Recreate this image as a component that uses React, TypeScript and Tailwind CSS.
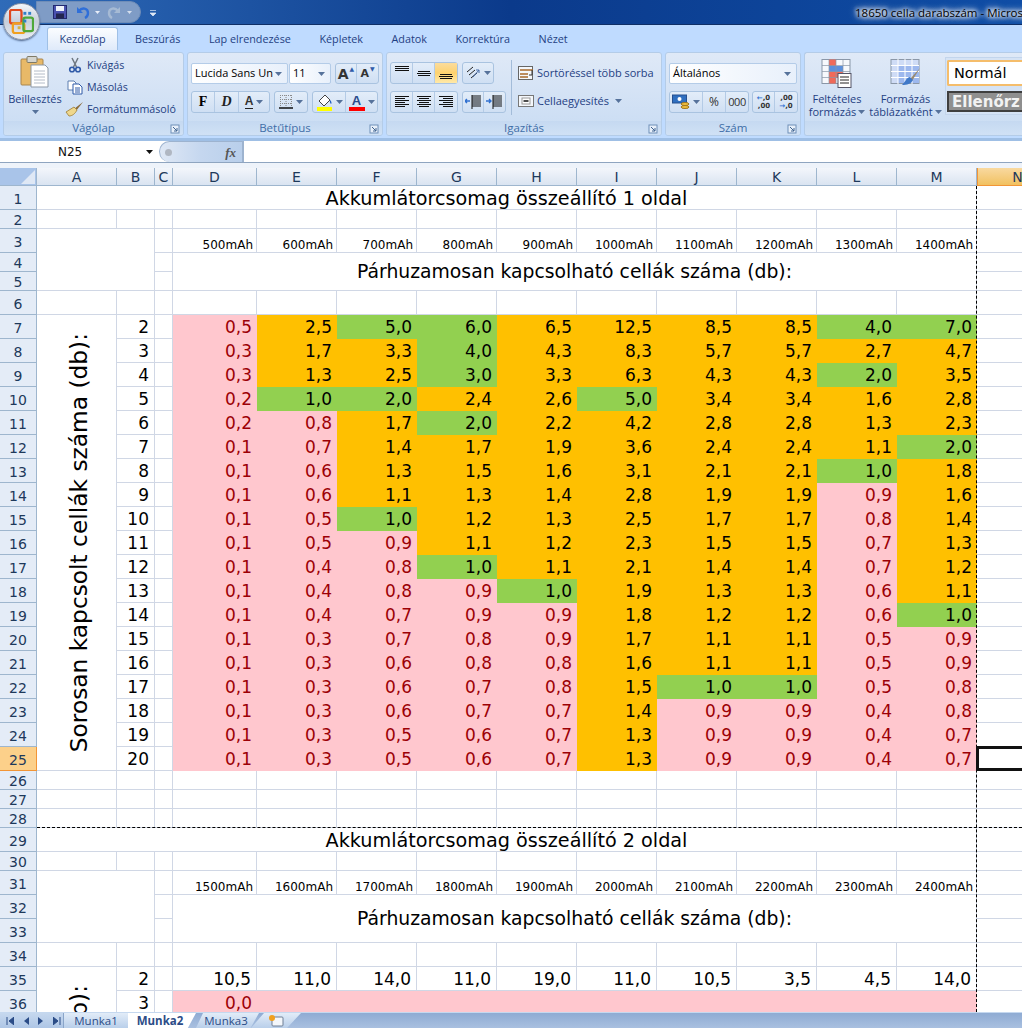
import type { ReactNode } from "react";

const uiFont = "font-['Open_Sans','DejaVu_Sans',sans-serif]";
const cellFont = "font-['DejaVu_Sans',sans-serif]";
const grid = "border-r border-b border-[#d0d7e5]";

const columns = ["A", "B", "C", "D", "E", "F", "G", "H", "I", "J", "K", "L", "M", "N"];

const page1: string[][] = [
  ["0,5", "2,5", "5,0", "6,0", "6,5", "12,5", "8,5", "8,5", "4,0", "7,0"],
  ["0,3", "1,7", "3,3", "4,0", "4,3", "8,3", "5,7", "5,7", "2,7", "4,7"],
  ["0,3", "1,3", "2,5", "3,0", "3,3", "6,3", "4,3", "4,3", "2,0", "3,5"],
  ["0,2", "1,0", "2,0", "2,4", "2,6", "5,0", "3,4", "3,4", "1,6", "2,8"],
  ["0,2", "0,8", "1,7", "2,0", "2,2", "4,2", "2,8", "2,8", "1,3", "2,3"],
  ["0,1", "0,7", "1,4", "1,7", "1,9", "3,6", "2,4", "2,4", "1,1", "2,0"],
  ["0,1", "0,6", "1,3", "1,5", "1,6", "3,1", "2,1", "2,1", "1,0", "1,8"],
  ["0,1", "0,6", "1,1", "1,3", "1,4", "2,8", "1,9", "1,9", "0,9", "1,6"],
  ["0,1", "0,5", "1,0", "1,2", "1,3", "2,5", "1,7", "1,7", "0,8", "1,4"],
  ["0,1", "0,5", "0,9", "1,1", "1,2", "2,3", "1,5", "1,5", "0,7", "1,3"],
  ["0,1", "0,4", "0,8", "1,0", "1,1", "2,1", "1,4", "1,4", "0,7", "1,2"],
  ["0,1", "0,4", "0,8", "0,9", "1,0", "1,9", "1,3", "1,3", "0,6", "1,1"],
  ["0,1", "0,4", "0,7", "0,9", "0,9", "1,8", "1,2", "1,2", "0,6", "1,0"],
  ["0,1", "0,3", "0,7", "0,8", "0,9", "1,7", "1,1", "1,1", "0,5", "0,9"],
  ["0,1", "0,3", "0,6", "0,8", "0,8", "1,6", "1,1", "1,1", "0,5", "0,9"],
  ["0,1", "0,3", "0,6", "0,7", "0,8", "1,5", "1,0", "1,0", "0,5", "0,8"],
  ["0,1", "0,3", "0,6", "0,7", "0,7", "1,4", "0,9", "0,9", "0,4", "0,8"],
  ["0,1", "0,3", "0,5", "0,6", "0,7", "1,3", "0,9", "0,9", "0,4", "0,7"],
  ["0,1", "0,3", "0,5", "0,6", "0,7", "1,3", "0,9", "0,9", "0,4", "0,7"],
];

const row35 = ["10,5", "11,0", "14,0", "11,0", "19,0", "11,0", "10,5", "3,5", "4,5", "14,0"];
const caps1 = ["500", "600", "700", "800", "900", "1000", "1100", "1200", "1300", "1400"];
const caps2 = ["1500", "1600", "1700", "1800", "1900", "2000", "2100", "2200", "2300", "2400"];

// same rule as the conditional formatting in the sheet
function fillFor(v: string) {
  const n = parseFloat(v.replace(",", "."));
  if (n < 1) return "bg-[#ffc7ce] text-[#9c0006]";
  if (Number.isInteger(n)) return "bg-[#92d050] text-black";
  return "bg-[#ffc000] text-black";
}

function Caret({ className = "" }: { className?: string }) {
  return (
    <svg width="7" height="4" viewBox="0 0 7 4" className={className}>
      <path d="M0 0h7L3.5 4z" fill="#56729b" />
    </svg>
  );
}

function Launcher() {
  return (
    <svg width="10" height="10" viewBox="0 0 10 10" className="absolute right-[3px] top-[3px]">
      <rect x="1" y="1" width="8" height="8" fill="#e8f0fa" stroke="#6f8fb8" />
      <path d="M3 3l4 4M7 4v3H4" stroke="#3f638f" fill="none" />
    </svg>
  );
}

function Group({ label, width, children, last }: { label?: string; width: string; children: ReactNode; last?: boolean }) {
  return (
    <div className={`${width} ${last ? "rounded-l-[3px] border-r-0" : "rounded-[3px]"} flex shrink-0 flex-col overflow-hidden border border-[#b4cce8] bg-gradient-to-b from-[#dfe9f7] to-[#c9dcf3]`}>
      <div className="relative h-[68px] shrink-0">{children}</div>
      <div className="relative flex flex-1 items-center justify-center bg-gradient-to-b from-[#c5d9f1] to-[#d0e1f5] text-[11.5px] leading-none text-[#3f6ea8]">
        {label}
        {label && <Launcher />}
      </div>
    </div>
  );
}

function BtnGroup({ children, className = "" }: { children: ReactNode; className?: string }) {
  return (
    <div className={`flex items-stretch divide-x divide-[#b4cbe6] rounded-[3px] border border-[#a9c3e0] bg-gradient-to-b from-[#e3edf9] to-[#cfdff3] ${className}`}>
      {children}
    </div>
  );
}

function Btn({ children, w = "w-[22px]", active }: { children: ReactNode; w?: string; active?: boolean }) {
  return (
    <div className={`flex ${w} items-center justify-center gap-[3px] ${active ? "bg-gradient-to-b from-[#fbdc9c] via-[#fdd26e] to-[#ffe9a8]" : ""}`}>{children}</div>
  );
}

function Lines({ rows }: { rows: [number, number, number][] }) {
  return (
    <svg width="16" height="14" viewBox="0 0 16 14">
      {rows.map(([x1, x2, y], i) => (
        <rect key={i} x={x1} y={y} width={x2 - x1} height="1" fill="#111" />
      ))}
    </svg>
  );
}

const Select = ({ text, className }: { text: string; className: string }) => (
  <div className={`flex items-center justify-between rounded-[2px] border border-[#b4cce8] bg-gradient-to-r from-white to-[#e8f0fb] pl-[3px] pr-[5px] text-[11px] text-black ${className}`}>
    <span className="whitespace-nowrap">{text}</span>
    <Caret />
  </div>
);

function ClipboardGroup() {
  return (
    <Group label="Vágólap" width="w-[181px]">
      <div className="flex h-full">
        <div className="flex w-[62px] flex-col items-center pt-[3px]">
          <svg width="30" height="32" viewBox="0 0 30 32">
            <rect x="1" y="3" width="22" height="26" rx="1" fill="#e8b968" stroke="#a9854c" />
            <rect x="7" y="0.5" width="10" height="6" rx="1" fill="#d5d5cf" stroke="#7f7a66" />
            <path d="M11 9h14l3 3v19H11z" fill="#fff" stroke="#8d99a8" />
            <path d="M14 15h11M14 18h11M14 21h11M14 24h11M14 27h11" stroke="#b4bcc8" />
          </svg>
          <div className="mt-[4px] text-[11px] leading-[14px] text-[#1f3f83]">Beillesztés</div>
          <Caret className="mt-[4px]" />
        </div>
        <div className="flex flex-col gap-[6px] pl-[1px] pt-[4px] text-[10.7px] leading-[16px] text-[#1f3f83]">
          <div className="flex items-center gap-[4px]">
            <svg width="16" height="16" viewBox="0 0 16 16">
              <path d="M5 1l4.5 9M11 1L6.5 10" stroke="#6f7780" strokeWidth="1.5" />
              <circle cx="5" cy="12.5" r="2.3" fill="none" stroke="#2f5aa8" strokeWidth="1.6" />
              <circle cx="11" cy="12.5" r="2.3" fill="none" stroke="#2f5aa8" strokeWidth="1.6" />
            </svg>
            Kivágás
          </div>
          <div className="flex items-center gap-[4px]">
            <svg width="16" height="16" viewBox="0 0 16 16">
              <path d="M1 2h6l2 2v7H1z" fill="#fff" stroke="#5c7fb0" />
              <path d="M6 5h6l3 3v7H6z" fill="#fff" stroke="#2f5aa8" />
              <path d="M8 9h5M8 11h5M8 13h5" stroke="#2f5aa8" />
            </svg>
            Másolás
          </div>
          <div className="-ml-[2px] flex items-center gap-[3px]">
            <svg width="19" height="16" viewBox="0 0 19 16">
              <path d="M18 1L9 8l2 2z" fill="#8a6a3a" />
              <path d="M9 6L1 11l3 4c3 0 6-2 8-6z" fill="#efd78c" stroke="#a98e4c" />
            </svg>
            Formátummásoló
          </div>
        </div>
      </div>
    </Group>
  );
}

function FontGroup() {
  return (
    <Group label="Betűtípus" width="w-[196px]">
      <div className="flex flex-col gap-[7px] pl-[3px] pt-[10px]">
        <div className="flex h-[21px] gap-[1px]">
          <Select text="Lucida Sans Un" className="w-[97px]" />
          <Select text="11" className="w-[42px]" />
          <BtnGroup className="ml-[3px]">
            <Btn w="w-[21px]">
              <span className={`${cellFont} text-[14px] font-bold leading-none text-[#333]`}>A</span>
              <span className="-ml-[2px] -mt-[8px] text-[6px] text-[#2f5aa8]">▲</span>
            </Btn>
            <Btn w="w-[21px]">
              <span className={`${cellFont} text-[11px] font-bold leading-none text-[#333]`}>A</span>
              <span className="-ml-[2px] -mt-[8px] text-[6px] text-[#2f5aa8]">▼</span>
            </Btn>
          </BtnGroup>
        </div>
        <div className="flex h-[22px] gap-[4px]">
          <BtnGroup>
            <Btn w="w-[23px]">
              <span className="font-['Liberation_Serif',serif] text-[14px] font-bold leading-none text-black">F</span>
            </Btn>
            <Btn w="w-[24px]">
              <span className="font-['Liberation_Serif',serif] text-[14px] font-bold italic leading-none text-[#222]">D</span>
            </Btn>
            <Btn w="w-[30px]">
              <span className="border-b border-[#222] font-['Liberation_Sans',sans-serif] text-[12px] font-bold leading-[13px] text-[#333]">A</span>
              <Caret />
            </Btn>
          </BtnGroup>
          <BtnGroup>
            <Btn w="w-[32px]">
              <svg width="14" height="14" viewBox="0 0 14 14">
                <path d="M1 .5h12M1 4.5h12M1 8.5h12M1.5 0v12M7 0v12M12.5 0v12" stroke="#8a8a8a" strokeDasharray="1 1" />
                <path d="M0 13h14" stroke="#111" strokeWidth="1.4" />
              </svg>
              <Caret />
            </Btn>
          </BtnGroup>
          <BtnGroup>
            <Btn w="w-[33px]">
              <svg width="17" height="17" viewBox="0 0 17 17">
                <path d="M3 7l6-6 5 5-6 6z" fill="#fff" stroke="#444" />
                <path d="M14 6c1.5 1.5 2 3 1 4-1-1-1.500-2.500-1-4z" fill="#1f5fbf" />
                <rect x="1" y="13" width="15" height="4" fill="#ffff00" />
              </svg>
              <Caret />
            </Btn>
            <Btn w="w-[31px]">
              <span className="relative flex flex-col items-center">
                <span className="font-['Liberation_Sans',sans-serif] text-[13px] font-bold leading-[13px] text-[#2a4c8c]">A</span>
                <span className="h-[4px] w-[16px] bg-[#ff0000]" />
              </span>
              <Caret />
            </Btn>
          </BtnGroup>
        </div>
      </div>
    </Group>
  );
}

function AlignGroup() {
  return (
    <Group label="Igazítás" width="w-[276px]">
      <div className="flex h-full">
        <div className="flex flex-col gap-[7px] pl-[3px] pt-[9px]">
          <div className="flex h-[22px] gap-[4px]">
            <BtnGroup>
              <Btn><Lines rows={[[1, 15, 0], [1, 15, 2], [1, 15, 4]]} /></Btn>
              <Btn><Lines rows={[[2, 14, 5], [1, 15, 7], [2, 14, 9]]} /></Btn>
              <Btn active><Lines rows={[[2, 14, 8], [1, 15, 10], [2, 14, 12]]} /></Btn>
            </BtnGroup>
            <BtnGroup>
              <Btn w="w-[30px]">
                <svg width="16" height="14" viewBox="0 0 16 14">
                  <path d="M2 6l6-5M4 9l6-5M6 12l6-5" stroke="#222" />
                  <path d="M8 11l6-7m0 0h-3m3 0v3" stroke="#4a6ea8" fill="none" />
                </svg>
                <Caret />
              </Btn>
            </BtnGroup>
          </div>
          <div className="flex h-[22px] gap-[4px]">
            <BtnGroup>
              <Btn><Lines rows={[[1, 15, 1], [1, 11, 3], [1, 15, 5], [1, 11, 7], [1, 15, 9], [1, 11, 11]]} /></Btn>
              <Btn><Lines rows={[[1, 15, 1], [3, 13, 3], [1, 15, 5], [3, 13, 7], [1, 15, 9], [3, 13, 11]]} /></Btn>
              <Btn><Lines rows={[[1, 15, 1], [5, 15, 3], [1, 15, 5], [5, 15, 7], [1, 15, 9], [5, 15, 11]]} /></Btn>
            </BtnGroup>
            <BtnGroup>
              <Btn w="w-[21px]">
                <svg width="17" height="14" viewBox="0 0 17 14">
                  <path d="M7 1h9M7 3h9M7 5h9M7 7h9M7 9h9M7 11h9M7 0v14" stroke="#111" />
                  <path d="M0 6h5M2 4L0 6l2 2" stroke="#2f6fd0" fill="none" strokeWidth="1.4" />
                </svg>
              </Btn>
              <Btn w="w-[21px]">
                <svg width="17" height="14" viewBox="0 0 17 14">
                  <path d="M7 1h9M7 3h9M7 5h9M7 7h9M7 9h9M7 11h9M7 0v14" stroke="#111" />
                  <path d="M0 6h5M3 4l2 2-2 2" stroke="#2f6fd0" fill="none" strokeWidth="1.4" />
                </svg>
              </Btn>
            </BtnGroup>
          </div>
        </div>
        <div className="ml-[5px] mt-[7px] h-[55px] w-px bg-[#a3bcd9]" />
        <div className="flex flex-col gap-[8px] pl-[6px] pt-[10px] text-[11px] leading-[20px] text-[#1f3f83]">
          <div className="flex items-center gap-[3px]">
            <svg width="16" height="15" viewBox="0 0 16 15">
              <rect x="0.500" y="0.500" width="14" height="13" fill="#f4f7fb" stroke="#666" />
              <path d="M2 4h13M2 8h8M2 11h8" stroke="#a8692b" strokeWidth="1.4" />
              <path d="M14 4v5h-3" stroke="#333" fill="none" />
            </svg>
            <span className="whitespace-nowrap">Sortöréssel több sorba</span>
          </div>
          <div className="flex items-center gap-[3px]">
            <svg width="16" height="15" viewBox="0 0 16 15">
              <rect x="0.500" y="1.500" width="15" height="11" fill="#f4f7fb" stroke="#777" />
              <rect x="4" y="4" width="8" height="6" fill="#fff" stroke="#999" />
              <path d="M5.500 7h5" stroke="#111" strokeWidth="1.400" />
            </svg>
            <span className="whitespace-nowrap">Cellaegyesítés</span>
            <Caret className="ml-[3px]" />
          </div>
        </div>
      </div>
    </Group>
  );
}

function NumberGroup() {
  return (
    <Group label="Szám" width="w-[136px]">
      <div className="flex flex-col gap-[7px] pl-[3px] pt-[10px]">
        <Select text="Általános" className="h-[21px] w-[128px]" />
        <div className="flex h-[22px] gap-[3px]">
          <BtnGroup>
            <Btn w="w-[33px]">
              <svg width="18" height="16" viewBox="0 0 18 16">
                <rect x="0.500" y="1" width="14" height="8" fill="#2f6fc0" stroke="#26508f" />
                <circle cx="7.500" cy="5" r="2" fill="#fff" />
                <ellipse cx="13" cy="10" rx="4" ry="1.500" fill="#f0c040" stroke="#a07820" />
                <ellipse cx="13" cy="13" rx="4" ry="1.500" fill="#f0c040" stroke="#a07820" />
              </svg>
              <Caret />
            </Btn>
            <Btn w="w-[23px]"><span className="text-[12px] text-[#333]">%</span></Btn>
            <Btn w="w-[22px]"><span className="text-[11px] tracking-[-0.5px] text-[#333]">000</span></Btn>
          </BtnGroup>
          <BtnGroup>
            <Btn w="w-[22px]">
              <span className={`${cellFont} relative text-right text-[7px] font-bold leading-[8px] text-[#333]`}>
                <span className="text-[#2f6fd0]">←</span>,0
                <br />,00
              </span>
            </Btn>
            <Btn w="w-[22px]">
              <span className={`${cellFont} relative text-right text-[7px] font-bold leading-[8px] text-[#333]`}>
                ,00
                <br />
                <span className="text-[#2f6fd0]">→</span>,0
              </span>
            </Btn>
          </BtnGroup>
        </div>
      </div>
    </Group>
  );
}

function BigBtn({ icon, lines, w }: { icon: ReactNode; lines: string[]; w: string }) {
  return (
    <div className={`flex ${w} shrink-0 flex-col items-center pt-[6px] text-[11px] leading-[13px] text-[#1f3f83]`}>
      <div className="h-[31px]">{icon}</div>
      <div className="mt-[2px] whitespace-nowrap">{lines[0]}</div>
      <div className="flex items-center gap-[2px] whitespace-nowrap">
        {lines[1]}
        <Caret />
      </div>
    </div>
  );
}

function StylesGroup() {
  return (
    <Group width="w-[218px]" last>
      <div className="flex h-full">
        <BigBtn
          w="w-[64px]"
          lines={["Feltételes", "formázás"]}
          icon={
            <svg width="32" height="30" viewBox="0 0 32 30">
              <rect x="1" y="0.500" width="28" height="24" fill="#f6f8fc" stroke="#8a97a8" />
              <rect x="8" y="0.500" width="7" height="24" fill="#ef6a5a" />
              <rect x="8" y="7" width="14" height="6" fill="#5b8fdc" />
              <rect x="8" y="13" width="14" height="6" fill="#ef6a5a" />
              <path d="M1 6.500h28M1 12.500h28M1 18.500h28M8 0v25M15 0v25M22 0v25" stroke="#8a97a8" strokeWidth="0.700" />
              <rect x="17" y="14.500" width="13" height="14" fill="#fff" stroke="#556" />
              <path d="M19 18h9M19 21h9M19 24h9" stroke="#222" />
            </svg>
          }
        />
        <BigBtn
          w="w-[73px]"
          lines={["Formázás", "táblázatként"]}
          icon={
            <svg width="32" height="30" viewBox="0 0 32 30">
              <rect x="1" y="0.500" width="28" height="24" fill="#cfdcf6" stroke="#8a97a8" />
              <rect x="8" y="7" width="21" height="17" fill="#9db8ee" />
              <path d="M1 6.500h28M1 12.500h28M1 18.500h28M8 0v25M15 0v25M22 0v25" stroke="#fff" />
              <path d="M30 9L20 20l2 2z" fill="#9a8a70" />
              <path d="M20 18c-3 0-4 4-8 8 5 0 9-1 11-5z" fill="#3f78c8" />
            </svg>
          }
        />
        <div className="ml-[3px] mt-[4px] flex h-[58px] w-full flex-col gap-[5px] border-y border-l border-[#c3d5ec] bg-[#d5e3f5] pl-[1px] pt-[2px]">
          <div className="h-[26px] rounded-l-[2px] border-2 border-r-0 border-[#f5bd6b] bg-white pl-[5px] text-[14.5px] leading-[21px] text-black">
            <span className={cellFont}>Normál</span>
          </div>
          <div className="h-[21px] border-2 border-r-0 border-[#3f3f3f] bg-[#8f8f8f] pl-[3px] text-[15px] font-bold leading-[16px] text-[#f2f2f2]">
            <span className={cellFont}>Ellenőrz</span>
          </div>
        </div>
      </div>
    </Group>
  );
}

function TitleBar() {
  return (
    <div className="relative h-[25px] shrink-0 overflow-hidden border-b border-[#0f2f66] bg-gradient-to-r from-[#2f6bb8] via-[#0b3a8b] to-[#0f4da6]">
      <div className="absolute left-[36px] top-[1px] flex h-[22px] w-[105px] items-center rounded-r-[12px] border border-[#6f8db8] bg-[#7f9cc6] pl-[16px]">
        <svg width="14" height="14" viewBox="0 0 14 14">
          <rect x="0.500" y="0.500" width="13" height="13" fill="#4a52b0" stroke="#222a70" />
          <rect x="3" y="1" width="8" height="5" fill="#eef2fa" />
          <rect x="3" y="8.500" width="8" height="5" fill="#22264f" />
        </svg>
        <svg width="14" height="13" viewBox="0 0 14 13" className="ml-[9px]">
          <path d="M3 5c3-4 9-3 9 2 0 2-1 4-3 5" fill="none" stroke="#2f6fd8" strokeWidth="2.400" />
          <path d="M1 1v6h6z" fill="#2f6fd8" />
        </svg>
        <span className="ml-[5px] mt-[1px]"><svg width="5" height="3"><path d="M0 0h5L2.500 3z" fill="#e8eef8" /></svg></span>
        <svg width="14" height="13" viewBox="0 0 14 13" className="ml-[7px]">
          <path d="M11 5C8 1 2 2 2 7c0 2 1 4 3 5" fill="none" stroke="#a6bad4" strokeWidth="2.400" />
          <path d="M13 1v6H7z" fill="#a6bad4" />
        </svg>
        <span className="ml-[6px] mt-[1px]"><svg width="5" height="3"><path d="M0 0h5L2.500 3z" fill="#d5dfee" /></svg></span>
      </div>
      <svg width="6" height="6" viewBox="0 0 6 6" className="absolute left-[150px] top-[10px]">
        <path d="M0 0.500h6M0 3h6L3 6z" stroke="#dfe8f5" fill="#dfe8f5" strokeWidth="0.700" />
      </svg>
      <div className={`${uiFont} absolute left-[855px] top-[5px] whitespace-nowrap text-[11.5px] leading-[16px] text-black [text-shadow:0_0_4px_#fff,0_0_4px_#fff,0_0_7px_#fff,0_0_10px_#fff]`}>
        18650 cella darabszám - Microsoft Excel
      </div>
    </div>
  );
}

function OfficeButton() {
  return (
    <div className="absolute left-[3px] top-[3px] flex h-[37px] w-[37px] items-center justify-center rounded-full border border-[#8a94a6] bg-gradient-to-b from-[#f4f6fa] via-[#c7cfdb] to-[#e9edf4] shadow-[0_1px_2px_#4a6288]">
      <svg width="25" height="25" viewBox="0 0 26 26">
        <rect x="1" y="1" width="12" height="14" rx="2" fill="none" stroke="#e0491f" strokeWidth="2.400" />
        <rect x="4" y="15" width="12" height="10" rx="2" fill="none" stroke="#f0a020" strokeWidth="2.400" />
        <rect x="15" y="9" width="10" height="14" rx="2" fill="none" stroke="#4fa83a" strokeWidth="2.400" />
        <rect x="15" y="3" width="3" height="3" fill="#2f7fc8" />
        <rect x="20" y="3" width="3" height="3" fill="#2f7fc8" />
        <rect x="15" y="11" width="3" height="3" fill="#2f7fc8" />
        <rect x="9" y="18" width="3" height="3" fill="#d8b040" />
      </svg>
    </div>
  );
}

function TabStrip() {
  const tabs = ["Beszúrás", "Lap elrendezése", "Képletek", "Adatok", "Korrektúra", "Nézet"];
  return (
    <div className={`${uiFont} flex h-[25px] shrink-0 items-end bg-[#bfdbff] pl-[47px] text-[10.8px] text-[#1f3f83]`}>
      <div className="flex h-[23px] w-[71px] items-center justify-center rounded-t-[3px] border border-b-0 border-[#9fc0e6] bg-gradient-to-b from-[#fbfdff] to-[#dfeafa] pt-[1px]">
        Kezdőlap
      </div>
      <div className="ml-[17px] flex h-[23px] items-center gap-[28.5px] pt-[1px]">
        {tabs.map((t) => (
          <span key={t}>{t}</span>
        ))}
      </div>
    </div>
  );
}

function Ribbon() {
  return (
    <div className={`${uiFont} flex h-[91px] shrink-0 gap-[3px] border-b-[3px] border-[#9fbfe5] bg-[#bfdbff] pb-[2px] pl-[3px] pt-[2px]`}>
      <ClipboardGroup />
      <FontGroup />
      <AlignGroup />
      <NumberGroup />
      <StylesGroup />
    </div>
  );
}

function FormulaBar() {
  return (
    <div className="flex h-[27px] shrink-0 flex-col bg-white">
      <div className="flex h-[22px] border-b border-[#8fa5c0]">
        <div className={`${cellFont} flex w-[159px] items-center justify-between pl-[58px] pr-[6px] text-[12px] text-[#111]`}>
          N25
          <svg width="7" height="4"><path d="M0 0h7L3.500 4z" fill="#111" /></svg>
        </div>
        <div className="flex w-[84px] items-center justify-between rounded-l-[11px] border border-b-0 border-[#9db3cf] bg-gradient-to-r from-[#dfe8f5] via-[#c5d7ef] to-[#b9cfeb] pl-[5px] pr-[6px]">
          <span className="h-[7px] w-[7px] rounded-full bg-[#b0b7c2]" />
          <span className="font-['Liberation_Serif',serif] text-[13px] font-bold italic leading-none text-[#555]">fx</span>
        </div>
        <div className="flex-1 border-l border-[#9db3cf]" />
      </div>
      <div className="flex-1 bg-[#eef3fa]" />
    </div>
  );
}

function ColHeader({ c }: { c: string }) {
  if (c === "N") {
    return (
      <div className="flex items-center justify-center border-b border-l border-[#f29536] bg-gradient-to-b from-[#f9d99f] to-[#f1c15f] text-[14px] leading-none text-[#1e395b]">
        {c}
      </div>
    );
  }
  return (
    <div className="flex items-center justify-center border-r border-b border-[#9eb6ce] bg-gradient-to-b from-[#f3f6fb] to-[#dae4f1] text-[14px] leading-none text-[#1e395b]">
      {c}
    </div>
  );
}

function RowHeader({ n, selected }: { n: number; selected?: boolean }) {
  return (
    <div className={`flex items-center justify-center border-b border-r pt-[2px] text-[14px] leading-none text-[#1e395b] ${selected ? "border-[#f29536] bg-[#fcd08a]" : "border-[#9eb6ce] bg-[#e4ecf7]"}`}>
      {n}
    </div>
  );
}

const Empty = ({ className = "" }: { className?: string }) => <div className={`${grid} ${className}`} />;

function EmptyRow({ n }: { n: number }) {
  return (
    <>
      <RowHeader n={n} />
      {columns.map((c) => (
        <Empty key={c} />
      ))}
    </>
  );
}

function TitleRow({ n, text }: { n: number; text: string }) {
  return (
    <>
      <RowHeader n={n} />
      <div className={`${grid} col-span-13 flex items-center justify-center pt-[3px] text-[19.2px] leading-none text-black`}>{text}</div>
      <Empty />
    </>
  );
}

function CapsBlock({ n, caps }: { n: number; caps: string[] }) {
  return (
    <>
      <RowHeader n={n} />
      <div className={`${grid} col-span-2 row-span-3`} />
      <Empty />
      {caps.map((c) => (
        <div key={c} className={`${grid} flex items-end justify-end pr-[3px] text-[12px] leading-[14px] text-black`}>
          {c}mAh
        </div>
      ))}
      <Empty />
      <RowHeader n={n + 1} />
      <Empty />
      <div className={`${grid} col-span-10 row-span-2 flex items-center justify-center pt-[2px] text-[18.8px] leading-none text-black`}>
        Párhuzamosan kapcsolható cellák száma (db):
      </div>
      <Empty />
      <RowHeader n={n + 2} />
      <Empty />
      <Empty />
    </>
  );
}

function SideLabel() {
  return (
    <div className={`${grid} row-span-19 flex items-center justify-center pl-[5px]`}>
      <span className="rotate-180 whitespace-nowrap text-[23.3px] leading-none text-black [writing-mode:vertical-rl]">
        Sorosan kapcsolt cellák száma (db):
      </span>
    </div>
  );
}

const Num = ({ v, className = "" }: { v: string | number; className?: string }) => (
  <div className={`flex items-center justify-end pr-[5px] pt-[1px] text-[17px] leading-none ${className}`}>{v}</div>
);

function Sheet() {
  return (
    <div className="relative min-h-0 flex-1 overflow-hidden">
      <div className={`${cellFont} grid grid-cols-[37px_80px_38px_18px_84px_repeat(9,80px)_80px] grid-rows-[18px_24px_19px_24px_19px_19px_24px_repeat(19,24px)_19px_19px_19px_24px_19px_repeat(26,24px)] bg-white text-black`}>
        <div className="relative border-r border-b border-[#9eb6ce] bg-[#a9c4e9]">
          <svg width="14" height="14" className="absolute bottom-[1px] right-[1px]">
            <path d="M14 0v14H0z" fill="#dfe8f5" />
          </svg>
        </div>
        {columns.map((c) => (
          <ColHeader key={c} c={c} />
        ))}

        <TitleRow n={1} text="Akkumlátorcsomag összeállító 1 oldal" />
        <EmptyRow n={2} />
        <CapsBlock n={3} caps={caps1} />
        <EmptyRow n={6} />

        {page1.map((row, i) => (
          <div key={i} className="contents">
            <RowHeader n={i + 7} selected={i === 18} />
            {i === 0 && <SideLabel />}
            <Num v={i + 2} className={grid} />
            <Empty />
            {row.map((v, j) => (
              <Num key={j} v={v} className={fillFor(v)} />
            ))}
            {i === 18 ? (
              <div className="relative z-10 -ml-[1px] -mt-[1px] border-[3px] border-[#111]" />
            ) : (
              <Empty />
            )}
          </div>
        ))}

        <EmptyRow n={26} />
        <EmptyRow n={27} />
        <EmptyRow n={28} />
        <TitleRow n={29} text="Akkumlátorcsomag összeállító 2 oldal" />
        <EmptyRow n={30} />
        <CapsBlock n={31} caps={caps2} />
        <EmptyRow n={34} />

        <RowHeader n={35} />
        <SideLabel />
        <Num v={2} className={grid} />
        <Empty />
        {row35.map((v, j) => (
          <Num key={j} v={v} className={grid} />
        ))}
        <Empty />

        <RowHeader n={36} />
        <Num v={3} className={grid} />
        <Empty />
        <div className="col-span-10 grid grid-cols-[84px_repeat(9,80px)] bg-[#ffc7ce] text-[#9c0006]">
          <Num v="0,0" />
        </div>
        <Empty />
      </div>

      {/* page break marks */}
      <div className="absolute bottom-0 left-[976px] top-[18px] border-l border-dashed border-black" />
      <div className="absolute left-[37px] right-0 top-[659px] border-t border-dashed border-black" />
    </div>
  );
}

function SheetTabs() {
  return (
    <div className={`${uiFont} relative flex h-[16px] shrink-0 items-stretch border-t border-[#c5d8ef] bg-gradient-to-b from-[#8fabd3] to-[#a9c0e0] text-[11.5px] leading-[15px] text-[#2b4c87]`}>
      <div className="flex w-[63px] items-center gap-[9px] bg-gradient-to-b from-[#c6d8ee] to-[#aec6e6] pl-[6px] text-[#2b4c87]">
        <svg width="8" height="8"><path d="M1 0v8M8 0v8L3 4z" stroke="#2b4c87" fill="#2b4c87" /></svg>
        <svg width="6" height="8"><path d="M6 0v8L1 4z" fill="#2b4c87" /></svg>
        <svg width="6" height="8"><path d="M0 0v8l5-4z" fill="#2b4c87" /></svg>
        <svg width="8" height="8"><path d="M7 0v8M0 0v8l5-4z" stroke="#2b4c87" fill="#2b4c87" /></svg>
      </div>
      <div className="flex w-[65px] items-center justify-center border-l border-[#8aa5c9] bg-gradient-to-b from-[#e2ecf8] to-[#b9cfea]">Munka1</div>
      <div className="flex w-[68px] items-center justify-center bg-white pr-[4px] font-bold [clip-path:polygon(0_0,100%_0,88%_100%,0_100%)]">Munka2</div>
      <div className="-ml-[7px] flex w-[70px] items-center justify-center bg-gradient-to-b from-[#e2ecf8] to-[#b9cfea] [clip-path:polygon(10%_100%,20%_0,100%_0,88%_100%)]">
        <span className="pl-[4px]">Munka3</span>
      </div>
      <div className="-ml-[8px] flex w-[50px] items-center bg-gradient-to-b from-[#e2ecf8] to-[#b9cfea] pl-[17px] [clip-path:polygon(0_100%,26%_0,100%_0,72%_100%)]">
        <svg width="16" height="14" viewBox="0 0 16 14">
          <rect x="4" y="3" width="11" height="9" rx="1" fill="#f4f7fb" stroke="#6f7f95" />
          <circle cx="4" cy="4" r="3" fill="#f0a020" />
        </svg>
      </div>
    </div>
  );
}

export default function App() {
  return (
    <div className="relative flex h-[1028px] w-[1022px] flex-col overflow-hidden bg-white">
      <TitleBar />
      <TabStrip />
      <Ribbon />
      <FormulaBar />
      <Sheet />
      <SheetTabs />
      <OfficeButton />
    </div>
  );
}
